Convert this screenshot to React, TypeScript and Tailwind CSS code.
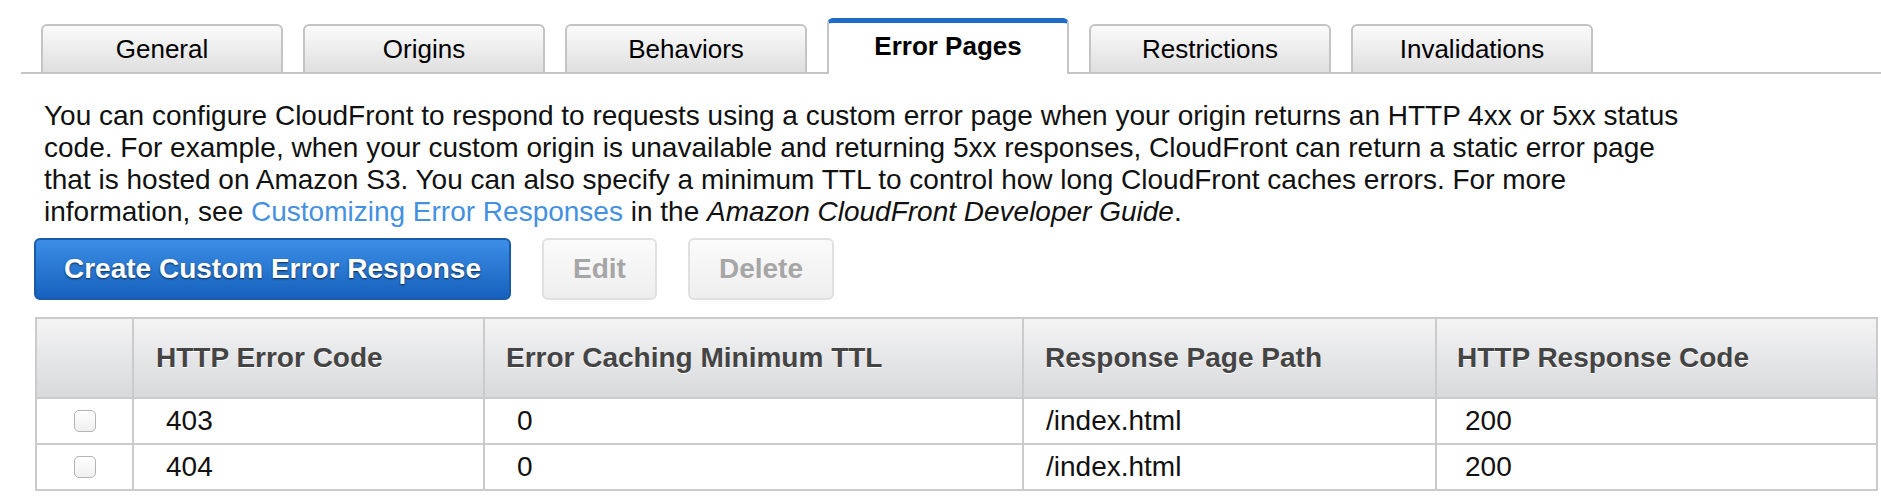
import React from "react";

const tabs = ["General", "Origins", "Behaviors", "Error Pages", "Restrictions", "Invalidations"];
const activeTab = "Error Pages";

type ErrorResponse = {
  code: string;
  ttl: string;
  path: string;
  responseCode: string;
};

const responses: ErrorResponse[] = [
  { code: "403", ttl: "0", path: "/index.html", responseCode: "200" },
  { code: "404", ttl: "0", path: "/index.html", responseCode: "200" },
];

function Tab({ label }: { label: string }) {
  if (label === activeTab) {
    return (
      <div className="relative z-10 -mb-[2px] flex h-[56px] w-[242px] items-center justify-center rounded-t-[6px] border-x-2 border-t-[5px] border-x-[#c4c4c4] border-t-[#1f6bc6] bg-white pb-[4px] text-[26px] font-bold text-black">
        {label}
      </div>
    );
  }
  return (
    <div className="flex h-[48px] w-[242px] items-center justify-center rounded-t-[6px] border-x-2 border-t-2 border-[#c4c4c4] bg-gradient-to-b from-[#fbfbfb] to-[#dfdfdf] text-[26px] text-black">
      {label}
    </div>
  );
}

function Checkbox() {
  return (
    <span className="mx-auto block h-[22px] w-[22px] rounded-[5px] border-[1.5px] border-[#b4b4b4] bg-gradient-to-b from-white to-[#efefef]" />
  );
}

export default function App() {
  return (
    <div className="min-h-[498px] bg-white pt-[18px] font-['Liberation_Sans',Arial,sans-serif]">
      <div className="ml-[21px] flex items-end gap-[20px] border-b-2 border-[#c4c4c4] pl-[20px]">
        {tabs.map((t) => (
          <Tab key={t} label={t} />
        ))}
      </div>

      <div className="pl-[35px] pr-[3px]">
        <p className="mt-[26px] pl-[9px] text-[28px] leading-[32px] text-[#111]">
          You can configure CloudFront to respond to requests using a custom error page when your origin returns an HTTP 4xx or 5xx status
          <br />
          code. For example, when your custom origin is unavailable and returning 5xx responses, CloudFront can return a static error page
          <br />
          that is hosted on Amazon S3. You can also specify a minimum TTL to control how long CloudFront caches errors. For more
          <br />
          information, see <span className="text-[#4590e0]">Customizing Error Responses</span> in the{" "}
          <em>Amazon CloudFront Developer Guide</em>.
        </p>

        <div className="mt-[10px] flex gap-[31px]">
          <button className="-ml-px h-[62px] rounded-[6px] border-2 border-[#1a5aa8] bg-gradient-to-b from-[#3b8ee6] to-[#1661bd] px-[28px] text-[28px] font-bold text-white [text-shadow:0_1px_2px_rgba(0,0,0,0.65)]">
            Create Custom Error Response
          </button>
          <button className="h-[62px] rounded-[6px] border-2 border-[#e0e0e0] bg-gradient-to-b from-[#fbfbfb] to-[#eeeeee] px-[29px] text-[28px] font-bold text-[#a6a6a6]">
            Edit
          </button>
          <button className="h-[62px] rounded-[6px] border-2 border-[#e0e0e0] bg-gradient-to-b from-[#fbfbfb] to-[#eeeeee] px-[29px] text-[28px] font-bold text-[#a6a6a6]">
            Delete
          </button>
        </div>

        <table className="mt-[17px] w-full table-fixed border-collapse border-2 border-[#cbcbcb] text-[28px]">
          <colgroup>
            <col className="w-[97px]" />
            <col className="w-[351px]" />
            <col className="w-[539px]" />
            <col className="w-[413px]" />
            <col />
          </colgroup>
          <thead>
            <tr className="h-[80px] bg-gradient-to-b from-[#f4f4f5] to-[#d8d9db] text-left font-bold text-[#444] [text-shadow:0_1px_0_#fff]">
              <th className="border-2 border-[#cbcbcb]" />
              <th className="border-2 border-[#cbcbcb] pl-[22px]">HTTP Error Code</th>
              <th className="border-2 border-[#cbcbcb] pl-[21px]">Error Caching Minimum TTL</th>
              <th className="border-2 border-[#cbcbcb] pl-[21px]">Response Page Path</th>
              <th className="border-2 border-[#cbcbcb] pl-[20px]">HTTP Response Code</th>
            </tr>
          </thead>
          <tbody className="text-[#111]">
            {responses.map((r) => (
              <tr key={r.code} className="h-[46px]">
                <td className="border-2 border-[#cbcbcb]">
                  <Checkbox />
                </td>
                <td className="border-2 border-[#cbcbcb] pl-[32px]">{r.code}</td>
                <td className="border-2 border-[#cbcbcb] pl-[32px]">{r.ttl}</td>
                <td className="border-2 border-[#cbcbcb] pl-[22px]">{r.path}</td>
                <td className="border-2 border-[#cbcbcb] pl-[28px]">{r.responseCode}</td>
              </tr>
            ))}
          </tbody>
        </table>
      </div>
    </div>
  );
}
